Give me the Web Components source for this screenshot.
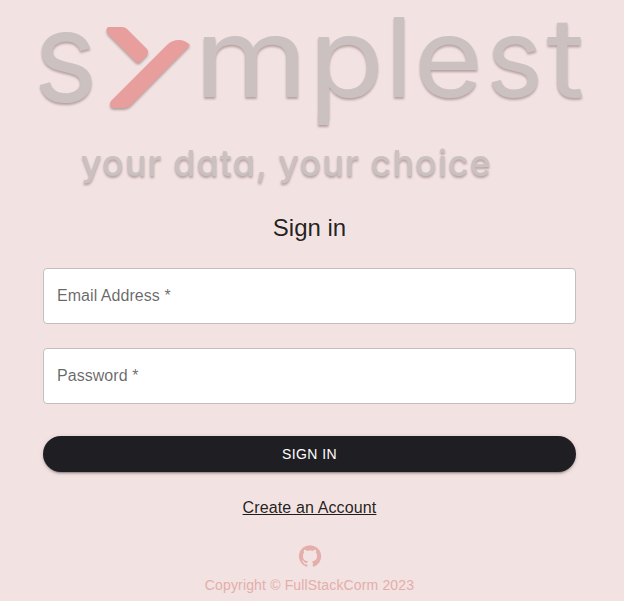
<!DOCTYPE html>
<html lang="en">
<head>
<meta charset="utf-8">
<title>Symplest</title>
<style>
body{margin:0;background:#f2e2e1;font-family:"Liberation Sans",Arial,sans-serif;color:rgba(0,0,0,.87)}
</style>
</head>
<body>
<sign-in-page></sign-in-page>
<script>
const define=(name,html)=>{
  const t=document.createElement('template');
  t.innerHTML=html;
  customElements.define(name,class extends HTMLElement{
    constructor(){super();this.attachShadow({mode:'open'}).append(t.content.cloneNode(true));}
  });
};

define('brand-logo',`
<style>
:host{display:block;height:206px}
svg{display:block;overflow:visible;filter:drop-shadow(0 2px 1.2px rgba(70,40,40,.35))}
text{font-family:Inter,sans-serif;fill:#cac1c0}
.word{font-size:110px;font-weight:430}
.tag{font-size:36px;font-weight:530;font-feature-settings:"cv11"}
</style>
<svg width="624" height="206" viewBox="0 0 624 206">
  <text class="word" style="font-size:126px" x="33.5" y="101.5" textLength="64" lengthAdjust="spacingAndGlyphs">s</text>
  <g fill="#e89e9c">
    <path d="M110 27H122Q125 27 127 29L147 49Q149 52 147 55L141 61Q138 64 135 61L108 34Q105 30 108 27Z"/>
    <path d="M167 45Q172 40 179 40Q185 40 190 45L131 105Q128 108 124 108H113Q108 106 111 101Z"/>
  </g>
  <text class="word" y="97" x="194" textLength="114" lengthAdjust="spacingAndGlyphs">m</text>
  <text class="word" y="97" x="309" textLength="75" lengthAdjust="spacingAndGlyphs">p</text>
  <rect x="318" y="112" width="10.5" height="13" fill="#cac1c0"/>
  <text class="word" y="97" x="385" textLength="28" lengthAdjust="spacingAndGlyphs">l</text>
  <text class="word" y="97" x="414" textLength="69" lengthAdjust="spacingAndGlyphs">e</text>
  <text class="word" y="97" x="486" textLength="57" lengthAdjust="spacingAndGlyphs">s</text>
  <text class="word" y="97" x="546.5" textLength="38" lengthAdjust="spacingAndGlyphs">t</text>
  <text class="tag" x="81" y="176" textLength="410">your data, your choice</text>
</svg>`);

define('text-field',`
<style>
:host{display:block;box-sizing:border-box;height:56px;border:1px solid #c2bfc2;border-radius:4px;background:#fff;padding:15px 13px;font-size:16px;line-height:24px;letter-spacing:.05px;color:rgba(0,0,0,.6)}
</style><slot></slot>`);

define('primary-button',`
<style>
:host{display:block}
button{display:block;width:100%;height:36px;border:0;border-radius:18px;background:#1f1e23;color:#fff;font:500 14px/24px "Liberation Sans",Arial,sans-serif;letter-spacing:.4px;padding:0;box-shadow:0 3px 1px -2px rgba(0,0,0,.2),0 2px 2px rgba(0,0,0,.14),0 1px 5px rgba(0,0,0,.12)}
</style><button><slot></slot></button>`);

define('page-footer',`
<style>
:host{display:flex;flex-direction:column;align-items:center;color:#e4aeab;font-size:14px;line-height:20px;letter-spacing:.15px}
svg{display:block;width:24px;height:24px;margin-bottom:7px}
</style>
<svg viewBox="0 0 24 24" fill="currentColor"><path d="M12 1.27a11 11 0 00-3.48 21.46c.55.09.73-.28.73-.55v-1.84c-3.03.64-3.67-1.46-3.67-1.46-.55-1.29-1.28-1.65-1.28-1.65-.92-.65.1-.65.1-.65 1.1 0 1.73 1.1 1.73 1.1.92 1.65 2.57 1.2 3.21.92a2 2 0 01.64-1.47c-2.47-.27-5.04-1.19-5.04-5.5 0-1.1.46-2.1 1.2-2.84a3.76 3.76 0 010-2.93s.91-.28 3.11 1.1c1.8-.49 3.7-.49 5.5 0 2.1-1.38 3.02-1.1 3.02-1.1a3.76 3.76 0 01.1 2.93c.73.74 1.19 1.74 1.19 2.84 0 4.31-2.57 5.23-5.04 5.5.45.37.82.92.82 2.02v3.03c0 .27.1.64.73.55A11 11 0 0012 1.27"/></svg>
<slot></slot>`);

define('sign-in-page',`
<style>
:host{display:block;height:601px}
main{width:533px;margin-left:43px;display:flex;flex-direction:column}
h1{font-weight:400;font-size:24px;line-height:32px;margin:6px 0 24px;text-align:center}
text-field+text-field{margin-top:24px}
primary-button{margin-top:32px}
a{align-self:center;margin-top:24px;font-size:16px;line-height:24px;letter-spacing:.13px;text-decoration:underline}
page-footer{margin-top:24px}
</style>
<brand-logo></brand-logo>
<main>
  <h1>Sign in</h1>
  <text-field>Email Address *</text-field>
  <text-field>Password *</text-field>
  <primary-button>SIGN IN</primary-button>
  <a>Create an Account</a>
  <page-footer>Copyright © FullStackCorm 2023</page-footer>
</main>`);
</script>
</body>
</html>
